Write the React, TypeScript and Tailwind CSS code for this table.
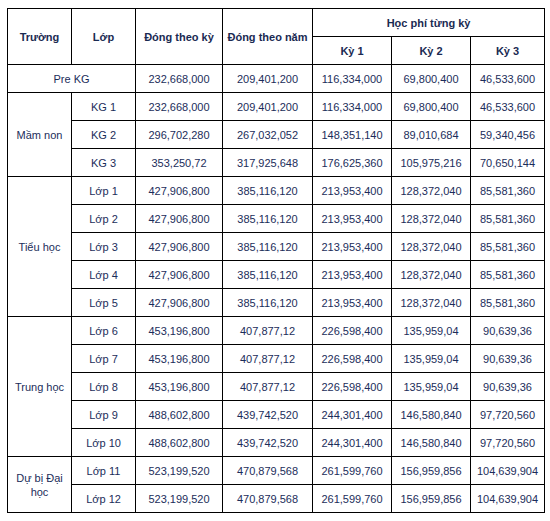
const rows: { school?: string; span?: number; grade: string; vals: string[]; full?: boolean }[] = [
  { grade: "Pre KG", full: true, vals: ["232,668,000", "209,401,200", "116,334,000", "69,800,400", "46,533,600"] },
  { school: "Mầm non", span: 3, grade: "KG 1", vals: ["232,668,000", "209,401,200", "116,334,000", "69,800,400", "46,533,600"] },
  { grade: "KG 2", vals: ["296,702,280", "267,032,052", "148,351,140", "89,010,684", "59,340,456"] },
  { grade: "KG 3", vals: ["353,250,72", "317,925,648", "176,625,360", "105,975,216", "70,650,144"] },
  { school: "Tiểu học", span: 5, grade: "Lớp 1", vals: ["427,906,800", "385,116,120", "213,953,400", "128,372,040", "85,581,360"] },
  { grade: "Lớp 2", vals: ["427,906,800", "385,116,120", "213,953,400", "128,372,040", "85,581,360"] },
  { grade: "Lớp 3", vals: ["427,906,800", "385,116,120", "213,953,400", "128,372,040", "85,581,360"] },
  { grade: "Lớp 4", vals: ["427,906,800", "385,116,120", "213,953,400", "128,372,040", "85,581,360"] },
  { grade: "Lớp 5", vals: ["427,906,800", "385,116,120", "213,953,400", "128,372,040", "85,581,360"] },
  { school: "Trung học", span: 5, grade: "Lớp 6", vals: ["453,196,800", "407,877,12", "226,598,400", "135,959,04", "90,639,36"] },
  { grade: "Lớp 7", vals: ["453,196,800", "407,877,12", "226,598,400", "135,959,04", "90,639,36"] },
  { grade: "Lớp 8", vals: ["453,196,800", "407,877,12", "226,598,400", "135,959,04", "90,639,36"] },
  { grade: "Lớp 9", vals: ["488,602,800", "439,742,520", "244,301,400", "146,580,840", "97,720,560"] },
  { grade: "Lớp 10", vals: ["488,602,800", "439,742,520", "244,301,400", "146,580,840", "97,720,560"] },
  { school: "Dự bị Đại học", span: 2, grade: "Lớp 11", vals: ["523,199,520", "470,879,568", "261,599,760", "156,959,856", "104,639,904"] },
  { grade: "Lớp 12", vals: ["523,199,520", "470,879,568", "261,599,760", "156,959,856", "104,639,904"] },
];

const cell = "border border-black text-center align-middle px-1 p-0";

export default function App() {
  return (
    <div
      className="w-[550px] h-[521px] bg-white pt-[8px] pl-[7px] text-[11px] leading-[14px] text-[#1b2d5a]"
      style={{ fontFamily: "'Liberation Sans', Arial, sans-serif" }}
    >
      <table className="table-fixed border-collapse w-[537px]">
        <colgroup>
          <col className="w-[64px]" />
          <col className="w-[64px]" />
          <col className="w-[87px]" />
          <col className="w-[90px]" />
          <col className="w-[79px]" />
          <col className="w-[79px]" />
          <col className="w-[74px]" />
        </colgroup>
        <thead className="font-bold text-[#1a2a52]">
          <tr className="h-[28px]">
            <th rowSpan={2} className={cell}>Trường</th>
            <th rowSpan={2} className={cell}>Lớp</th>
            <th rowSpan={2} className={cell}>Đóng theo kỳ</th>
            <th rowSpan={2} className={`${cell} whitespace-nowrap`}>Đóng theo năm</th>
            <th colSpan={3} className={cell}>Học phí từng kỳ</th>
          </tr>
          <tr className="h-[28px]">
            <th className={cell}>Kỳ 1</th>
            <th className={cell}>Kỳ 2</th>
            <th className={cell}>Kỳ 3</th>
          </tr>
        </thead>
        <tbody>
          {rows.map((r) => (
            <tr key={r.grade} className="h-[28px]">
              {r.full ? (
                <td colSpan={2} className={cell}>{r.grade}</td>
              ) : (
                <>
                  {r.school && (
                    <td rowSpan={r.span} className={cell}>
                      {r.school}
                    </td>
                  )}
                  <td className={cell}>{r.grade}</td>
                </>
              )}
              {r.vals.map((v, i) => (
                <td key={i} className={`${cell} whitespace-nowrap`}>{v}</td>
              ))}
            </tr>
          ))}
        </tbody>
      </table>
    </div>
  );
}
